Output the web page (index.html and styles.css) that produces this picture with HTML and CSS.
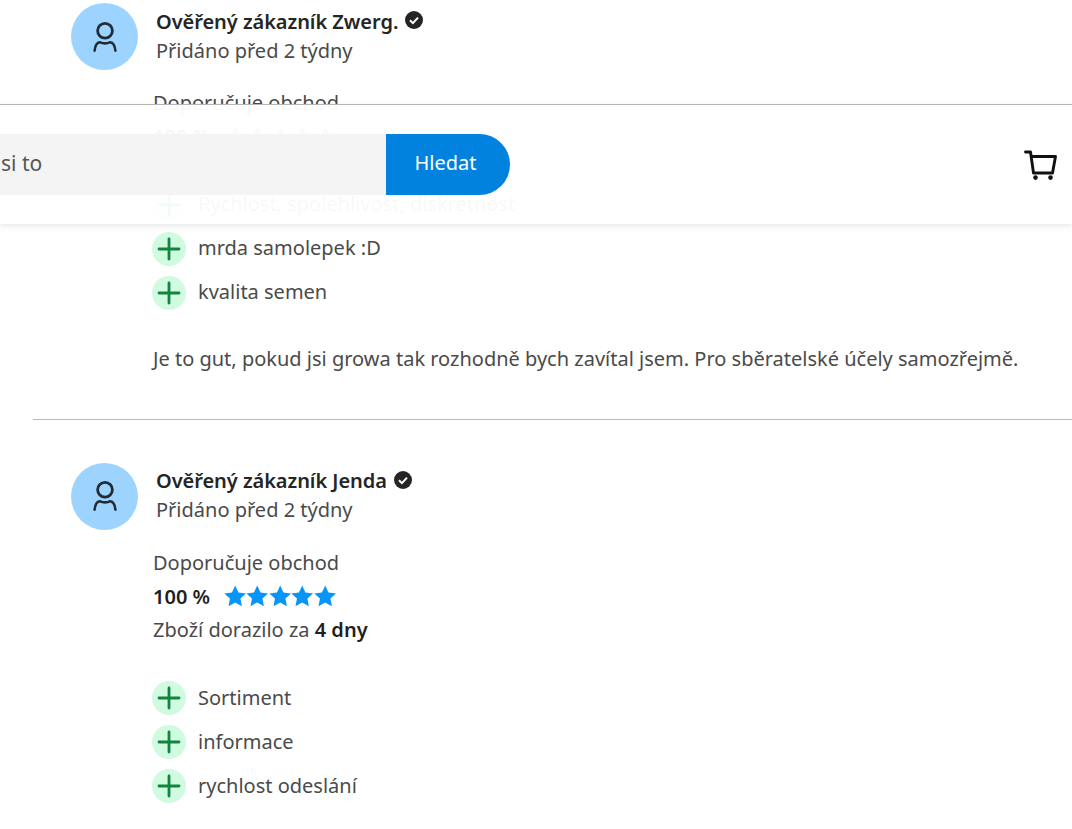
FILE: index.html
```html
<!DOCTYPE html>
<html lang="cs">
<head>
<meta charset="utf-8">
<title>Recenze</title>
<link rel="stylesheet" href="styles.css">
</head>
<body>
<svg class="defs" width="0" height="0" aria-hidden="true">
  <symbol id="user" viewBox="0 0 24 30"><circle cx="12" cy="8.8" r="7.4" fill="none" stroke="currentColor" stroke-width="2.8"/><path d="M1.6 28.6 C2.2 23 4.2 20.2 7.2 20.2 C9.5 21.8 14.5 21.8 16.8 20.2 C19.8 20.2 21.8 23 22.4 28.6" fill="none" stroke="currentColor" stroke-width="2.6" stroke-linecap="round" stroke-linejoin="round"/></symbol>
  <symbol id="verified" viewBox="0 0 18 18"><circle cx="9" cy="9" r="9" fill="currentColor"/><path d="M5 9.3 L7.9 12.1 L13 6.6" fill="none" stroke="#fff" stroke-width="2"/></symbol>
  <symbol id="plus" viewBox="0 0 34 34"><circle cx="17" cy="17" r="17" fill="#d0fbe0"/><path d="M7 17 H27 M17 7 V27" fill="none" stroke="#12843f" stroke-width="2.8" stroke-linecap="round"/></symbol>
  <symbol id="star" viewBox="0 0 24 24"><path d="M12 .6 L15.5 8 L23.6 9 L17.6 14.6 L19.2 22.7 L12 18.7 L4.8 22.7 L6.4 14.6 L.4 9 L8.5 8 Z" fill="#0795fa"/></symbol>
</svg>

<main class="reviews">
  <article class="review">
    <header class="author">
      <span class="avatar"><svg class="avatar-icon"><use href="#user"/></svg></span>
      <div>
        <div class="name">Ověřený zákazník Zwerg. <svg class="badge"><use href="#verified"/></svg></div>
        <div class="added">Přidáno před 2 týdny</div>
      </div>
    </header>
    <div class="summary">
      <div class="line">Doporučuje obchod</div>
      <div class="line score"><b>100 %</b><span class="stars"><svg><use href="#star"/></svg><svg><use href="#star"/></svg><svg><use href="#star"/></svg><svg><use href="#star"/></svg><svg><use href="#star"/></svg></span></div>
      <div class="line">Zboží dorazilo za <b>4 dny</b></div>
    </div>
    <ul class="pros">
      <li><svg class="plus"><use href="#plus"/></svg><span class="pro-text">Rychlost, spolehlivost, diskretnost</span></li>
      <li><svg class="plus"><use href="#plus"/></svg><span class="pro-text">mrda samolepek :D</span></li>
      <li><svg class="plus"><use href="#plus"/></svg><span class="pro-text">kvalita semen</span></li>
    </ul>
    <p class="comment">Je to gut, pokud jsi growa tak rozhodně bych zavítal jsem. Pro sběratelské účely samozřejmě.</p>
  </article>
  <article class="review">
    <header class="author">
      <span class="avatar"><svg class="avatar-icon"><use href="#user"/></svg></span>
      <div>
        <div class="name">Ověřený zákazník Jenda <svg class="badge"><use href="#verified"/></svg></div>
        <div class="added">Přidáno před 2 týdny</div>
      </div>
    </header>
    <div class="summary">
      <div class="line">Doporučuje obchod</div>
      <div class="line score"><b>100 %</b><span class="stars"><svg><use href="#star"/></svg><svg><use href="#star"/></svg><svg><use href="#star"/></svg><svg><use href="#star"/></svg><svg><use href="#star"/></svg></span></div>
      <div class="line">Zboží dorazilo za <b>4 dny</b></div>
    </div>
    <ul class="pros">
      <li><svg class="plus"><use href="#plus"/></svg><span class="pro-text">Sortiment</span></li>
      <li><svg class="plus"><use href="#plus"/></svg><span class="pro-text">informace</span></li>
      <li><svg class="plus"><use href="#plus"/></svg><span class="pro-text">rychlost odeslání</span></li>
    </ul>
  </article>
</main>

<div class="topbar">
  <div class="search">
    <div class="field"><span>si to</span></div>
    <button class="search-btn" type="button">Hledat</button>
  </div>
  <svg class="cart" viewBox="0 0 34 30"><path d="M1.5 2 H6.5 L9.5 23 H28.5 L31.5 6.5 H7.2" fill="none" stroke="#111" stroke-width="2.9" stroke-linecap="round" stroke-linejoin="round"/><circle cx="11.5" cy="27.6" r="2.3" fill="#111"/><circle cx="26.5" cy="27.6" r="2.3" fill="#111"/></svg>
</div>
</body>
</html>
```
FILE: styles.css
```css
html, body { margin: 0; height: 829px; overflow: hidden; background: #fff; }
body { position: relative; font-family: "Noto Sans", "Open Sans", sans-serif; font-size: 20px; color: #4a4a4a; }
.defs { position: absolute; }

.reviews { padding: 3px 0 0 33px; }
.review { border-bottom: 1px solid #b9b9b9; padding-bottom: 44px; margin-bottom: 43px; }
.review:last-child { border-bottom: 0; margin-bottom: 0; padding-bottom: 0; }

.author { display: flex; align-items: center; gap: 18px; padding-left: 38px; height: 67px; }
.avatar { width: 67px; height: 67px; border-radius: 50%; background: #9dd4ff; display: flex; align-items: center; justify-content: center; color: #222c36; }
.avatar-icon { width: 24px; height: 30px; }
.name { font-weight: 600; color: #252525; line-height: 28px; letter-spacing: -0.05px; display: flex; align-items: center; gap: 7px; }
.badge { width: 18px; height: 18px; color: #252525; margin-top: -3px; }
.added { line-height: 30px; }

.summary { padding-left: 120px; margin-top: 16px; }
.line { line-height: 33.5px; height: 33.5px; }
.line b { font-weight: 600; color: #1f1f1f; }
.score { display: flex; align-items: center; gap: 14px; padding-top: 1px; box-sizing: border-box; }
.stars { display: flex; }
.stars svg { width: 22.4px; height: 22.4px; }

.pros { list-style: none; margin: 1px 0 0; padding: 0 0 0 119px; display: flex; flex-direction: column; gap: 10px; }
.pros li { display: flex; align-items: center; gap: 12px; height: 34px; }
.pro-text { margin-bottom: 2px; }
.review:last-child .pros { margin-top: 35px; }
.plus { width: 34px; height: 34px; flex: none; }

.comment { margin: 32px 0 0; padding-left: 120px; line-height: 33px; white-space: nowrap; }

.topbar { position: absolute; left: 0; right: 0; top: 104px; height: 120px; box-sizing: border-box; border-top: 1.5px solid #b4b4b4; background: rgba(255,255,255,.96); box-shadow: 0 2px 6px rgba(0,0,0,.1); display: flex; align-items: center; justify-content: space-between; padding-right: 14px; }
.search { display: flex; height: 61px; }
.field { width: 386px; padding: 0 0 4px 1px; background: #f4f4f4; color: #555; font-size: 21px; box-sizing: border-box; display: flex; align-items: center; }
.search-btn { width: 124px; border: 0; padding: 0 5px 5px 0; background: #0082de; color: #fff; font: inherit; border-radius: 0 31px 31px 0; }
.cart { width: 34px; height: 30px; }
```
